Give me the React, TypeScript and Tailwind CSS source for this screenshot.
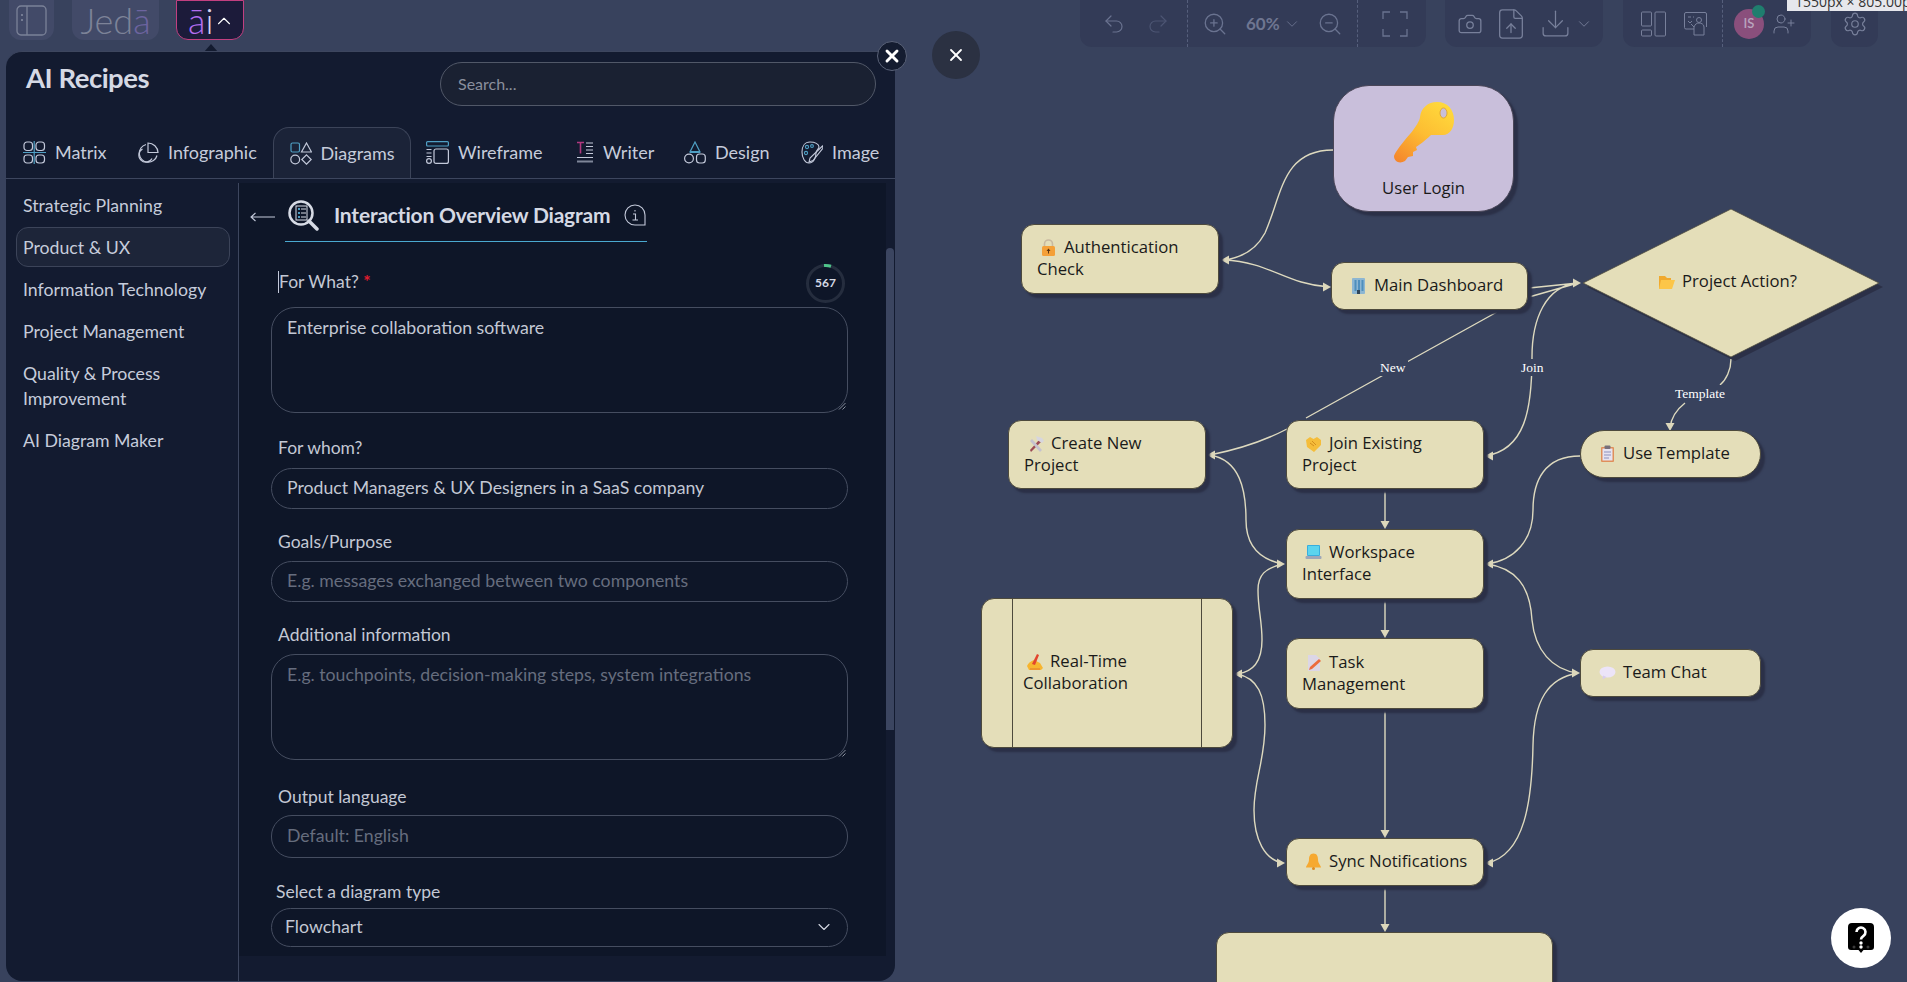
import type { ReactNode } from "react";
import {
  ChevronDown,
  ChevronUp,
  Camera,
  Download,
  FileUp,
  Redo2,
  Settings,
  Undo2,
  UserPlus,
  X,
  ZoomIn,
  ZoomOut,
} from "lucide-react";

/* ================= SMALL DRAWINGS ================= */
const BLUE = "#4f9fc4";
const LIGHT = "#c3c9da";

function Tab({ icon, label, w, active }: { icon: ReactNode; label: string; w: string; active?: boolean }) {
  return (
    <div
      className={`flex h-full items-center gap-[9px] ${
        active ? "rounded-t-2xl border border-b-0 border-[#3c4459] bg-[#1b2338] pl-[16px] pr-[12px]" : "px-[15.500px]"
      }`}
    >
      {icon}
      <span className={`${w} whitespace-nowrap text-[18px] text-[#c6ccdb]`}>{label}</span>
    </div>
  );
}

const MatrixIcon = (
  <svg width="23" height="23" viewBox="0 0 23 23" fill="none" stroke={LIGHT} strokeWidth="1.2">
    <rect x="1" y="1" width="8.5" height="8.5" rx="3" />
    <rect x="13" y="1" width="8.5" height="8.5" rx="3" />
    <rect x="1" y="14" width="8.5" height="8" rx="3" />
    <rect x="13" y="14" width="8.5" height="8" rx="3" />
    <path d="M0 11.5h23M11.2 0v23" stroke={BLUE} />
  </svg>
);
const PieIcon = (
  <svg width="22" height="22" viewBox="0 0 22 22" fill="none" stroke={LIGHT} strokeWidth="1.2">
    <path d="M9 2.5a9 9 0 1 0 11 11" />
    <path d="M5.5 7a7 7 0 1 0 9.5 9.5" />
    <path d="M11 1a10 10 0 0 1 10 9.5H11z" />
  </svg>
);
const DiagramIcon = (
  <svg width="22" height="23" viewBox="0 0 22 23" fill="none" stroke={LIGHT} strokeWidth="1.2">
    <rect x="1" y="1" width="8.5" height="9" rx="1.5" stroke={BLUE} />
    <path d="M16.5 1l5 9h-10z" />
    <circle cx="5.2" cy="17.5" r="4.4" />
    <path d="M16.5 12.8l4.7 4.7-4.7 4.7-4.7-4.7z" />
  </svg>
);
const WireframeIcon = (
  <svg width="23" height="23" viewBox="0 0 23 23" fill="none" stroke={LIGHT} strokeWidth="1.2">
    <rect x="0.6" y="0.6" width="21.8" height="4.4" rx="1" stroke={BLUE} />
    <rect x="8" y="8" width="14.4" height="14.4" rx="2" />
    <path d="M0.5 8.5h5M0.5 12h5M0.5 15.5h5" />
    <circle cx="3" cy="20" r="2.4" />
  </svg>
);
const WriterIcon = (
  <svg width="18" height="23" viewBox="0 0 18 23" fill="none" stroke={LIGHT} strokeWidth="1.2">
    <path d="M1 1.5h7M4.5 1.5v11" stroke="#b0397f" strokeWidth="1.6" />
    <path d="M10 2h7M10 5.5h7M10 9h7M10 12.5h7M1 16.5h16" />
    <path d="M1 20.5h16" strokeWidth="2" stroke="#7f8699" />
  </svg>
);
const DesignIcon = (
  <svg width="22" height="23" viewBox="0 0 22 23" fill="none" stroke={LIGHT} strokeWidth="1.2">
    <path d="M11 1l5 10H6z" stroke={BLUE} />
    <path d="M6 11h10" stroke={BLUE} strokeWidth="2" />
    <circle cx="5" cy="17.5" r="4.4" />
    <rect x="12.5" y="13" width="8.8" height="9" rx="3" />
  </svg>
);
const ImageIcon = (
  <svg width="22" height="23" viewBox="0 0 22 23" fill="none" stroke={LIGHT} strokeWidth="1.1">
    <path d="M9 1c5 0 9 2 9 5 0 2-3 3-3 6 0 4-2 10-7 10-4 0-7-5-7-11C1 5 4 1 9 1z" />
    <circle cx="6" cy="6" r="1.6" stroke={BLUE} />
    <circle cx="11" cy="5" r="1.4" stroke={BLUE} />
    <circle cx="5" cy="12" r="1.6" stroke={BLUE} />
    <path d="M21.5 5L9 17l-1 4 4-1.500L22 7z" />
  </svg>
);

const Grip = () => (
  <svg className="absolute bottom-[2px] right-[1px]" width="8" height="8" viewBox="0 0 8 8" stroke="#aab0bd" strokeWidth="0.8">
    <path d="M7.500 1L1 7.500M7.500 4.500L4.500 7.500" />
  </svg>
);

/* tiny colour pictures that stand for the emoji in the node labels */
const Emo = ({ children }: { children: ReactNode }) => (
  <svg className="mr-[7px] inline-block align-[-3px]" width="17" height="17" viewBox="0 0 17 17">
    {children}
  </svg>
);
const LockE = (
  <Emo>
    <path d="M4.500 7V5a4 4 0 0 1 8 0v2" fill="none" stroke="#c8b9a0" strokeWidth="1.6" />
    <rect x="2" y="7" width="13" height="10" rx="1.500" fill="#f4a038" />
    <path d="M8.500 9.500l2 2.500h-4zM8 12h1v2.500H8z" fill="#5b3410" />
  </Emo>
);
const BuildingE = (
  <Emo>
    <rect x="2" y="1" width="13" height="16" rx="1" fill="#8db6d2" />
    <path d="M4.500 3h2v11h-2zM8 3h2v11H8zM11.500 3h2v11h-2z" fill="#4f8fbd" />
    <rect x="7" y="13" width="3" height="4" fill="#30465a" />
  </Emo>
);
const ToolsE = (
  <Emo>
    <path d="M3 15L12 5l2 2-10 10z" fill="#9c4a54" />
    <path d="M15 15L5 4l-2 2 10 11z" fill="#c5c2cf" />
    <path d="M9 1l6 2 2 3-2 2-5-3z" fill="#d7d6de" />
  </Emo>
);
const HandE = (
  <Emo>
    <path d="M1 5l4-3 3.500 2L12 2l4 3 0 5-7 7-7-5z" fill="#f5bd3a" />
    <path d="M5 8l4 3M7 6l4 4" stroke="#d48e1e" strokeWidth="1" />
  </Emo>
);
const FolderE = (
  <Emo>
    <path d="M1 3h6l2 2h4v11H1z" fill="#f0a92e" />
    <path d="M3 7h14l-3 9H1z" fill="#fcc648" />
  </Emo>
);
const ClipE = (
  <Emo>
    <rect x="2" y="2" width="13" height="15" rx="1" fill="#e08f5b" />
    <rect x="3.500" y="3.500" width="10" height="12" fill="#e6e3f0" />
    <rect x="5.500" y="0.500" width="6" height="3.500" rx="1" fill="#77707a" />
    <path d="M5 7h7M5 10h7M5 13h5" stroke="#8d91bd" strokeWidth="1" />
  </Emo>
);
const LaptopE = (
  <Emo>
    <rect x="2" y="1" width="13" height="11" rx="1" fill="#38aede" />
    <rect x="3" y="2" width="11" height="9" fill="#5cd4ee" />
    <rect x="0.500" y="12" width="16" height="3" rx="1" fill="#9fa7b8" />
  </Emo>
);
const WriteE = (
  <Emo>
    <path d="M1 13c1-3 4-5 7-6l6 3 3 5-2 2H3z" fill="#f7b52f" />
    <path d="M6 11L11 1l2 1-4 10z" fill="#e2452e" />
    <path d="M4 16h10" stroke="#e2762e" strokeWidth="1" />
  </Emo>
);
const MemoE = (
  <Emo>
    <path d="M3 1h8l4 4v12H3z" fill="#dcd6e6" />
    <path d="M5 13l9-8 2 2-9 8-3 1z" fill="#ec6a3d" />
  </Emo>
);
const BellE = (
  <Emo>
    <path d="M8.500 0.500c3.500 0 4.500 3 4.500 6 0 4 3 6 3 8H1c0-2 3-4 3-8 0-3 1-6 4.500-6z" fill="#f6a931" />
    <circle cx="8.500" cy="15.500" r="1.500" fill="#e08a1d" />
  </Emo>
);
const ChatE = (
  <Emo>
    <ellipse cx="8.500" cy="8" rx="8" ry="5.500" fill="#ece4f8" />
    <path d="M4 11.500l-.5 4 4-2.500z" fill="#d9cdee" />
  </Emo>
);

function Node({ cls, emoji, first, rest }: { cls: string; emoji: ReactNode; first: string; rest?: string }) {
  return (
    <div
      className={`absolute flex items-center rounded-[13px] border border-[#4d4a3c] bg-[#e4deb9] pb-[2px] pl-[15px] text-[16.700px] leading-[22px] text-[#1a1a1a] shadow-[4px_4px_2px_#2b3047] ${cls}`}
    >
      <div>
        <div className="whitespace-nowrap pl-[3px]">
          {emoji}
          {first}
        </div>
        {rest && <div className="whitespace-nowrap">{rest}</div>}
      </div>
    </div>
  );
}

const EDGE = "M1333 150C1282 150 1282 195 1265 233C1256 250 1240 258 1224 260 M1224 260C1270 262 1285 284 1329 287 M1529 288L1578 283 M1529 297L1578 283 M1497 312L1306 418 M1287 429C1262 442 1235 450 1210 455 M1485 456C1525 450 1532 410 1532 357C1532 320 1545 286 1578 283 M1731 359C1731 370 1726 380 1720 385 M1685 403C1676 410 1671 418 1670 428 M1385 489V527 M1385 600V636 M1385 710V836 M1385 888V930 M1210 455C1240 460 1246 490 1246 520C1246 548 1262 560 1283 564 M1283 564C1265 568 1258 575 1258 590C1258 610 1262 620 1262 640C1262 660 1254 672 1237 674 M1237 674C1258 678 1265 695 1265 725C1265 760 1254 780 1254 810C1254 840 1265 860 1283 863 M1580 456C1545 456 1533 480 1533 510C1533 540 1515 560 1487 564 M1487 564C1515 568 1530 585 1532 620C1535 650 1552 670 1578 673 M1578 673C1548 678 1534 700 1533 745C1532 800 1525 855 1487 863";

/* ================= PAGE ================= */
export default function App() {
  return (
    <div className="relative h-[982px] w-[1907px] overflow-hidden bg-[#38425d] font-[Lato,sans-serif]">
      {/* CANVAS */}
      <div className="absolute -top-[1px] left-0 h-[983px] w-[1907px] font-['Open_Sans',sans-serif]">
        <svg className="absolute left-0 top-[1px]" width="1907" height="982" fill="none">
          <path d={EDGE} stroke="#dedabf" strokeWidth="1.400" />
          {/* arrow heads */}
          <g fill="#dcd7bb">
            <path d="M1221 260l8-4.500v9z" />
            <path d="M1331 287l-8-4.500v9z" />
            <path d="M1581 283l-8-4.500v9z" />
            <path d="M1207 455l8-4.500v9z" />
            <path d="M1485 456l8-4.500v9z" />
            <path d="M1670 431l-4.500-8h9z" />
            <path d="M1385 529l-4.500-8h9z" />
            <path d="M1385 638l-4.500-8h9z" />
            <path d="M1385 838l-4.500-8h9z" />
            <path d="M1385 932l-4.500-8h9z" />
            <path d="M1285 564l-8-4.500v9z" />
            <path d="M1234 674l8-4.500v9z" />
            <path d="M1285 863l-8-4.500v9z" />
            <path d="M1485 564l8-4.500v9z" />
            <path d="M1580 673l-8-4.500v9z" />
            <path d="M1485 863l8-4.500v9z" />
          </g>
          <polygon points="1583,283 1731,209 1879,283 1731,357" fill="#2b3047" transform="translate(4 4)" />
          <polygon points="1583,283 1731,209 1879,283 1731,357" fill="#e4deb9" stroke="#4d4a3c" strokeWidth="0.800" />
        </svg>

        {/* user login node */}
        <div className="absolute left-[1333px] top-[86px] flex h-[127px] w-[181px] flex-col items-center rounded-[36px] border border-[#4a4658] bg-[#c9bfdb] text-[16.700px] text-[#1a1a1a] shadow-[4px_4px_2px_#2b3047]">
          <svg className="mt-[16px]" width="61" height="61" viewBox="0 0 61 61">
            <defs>
              <linearGradient id="keyGrad" x1="0.800" y1="0" x2="0.100" y2="1">
                <stop offset="0" stopColor="#ffd93c" />
                <stop offset="0.500" stopColor="#fdbd32" />
                <stop offset="1" stopColor="#f5872c" />
              </linearGradient>
            </defs>
            <path
              d="M44 0C55 0 61 8 61 18C61 26 57 33 50 33L38 33C35 36 28 42 23 45L24 48L20 50L20 54L15 55L12 59C7 62 1 60 1 54C2 50 10 40 17 32C23 25 27 18 27 15C28 6 35 0 44 0Z"
              fill="url(#keyGrad)"
            />
            <ellipse cx="50.500" cy="11" rx="3.500" ry="5" fill="#c9bfdb" stroke="#dba02a" strokeWidth="0.800" />
          </svg>
          <span className="mt-[14px] leading-[22px]">User Login</span>
        </div>

        <Node cls="left-[1021px] top-[225px] h-[70px] w-[198px]" emoji={LockE} first="Authentication" rest="Check" />
        <Node cls="left-[1331px] top-[263px] h-[48px] w-[197px]" emoji={BuildingE} first="Main Dashboard" />
        <Node cls="left-[1008px] top-[421px] h-[69px] w-[198px]" emoji={ToolsE} first="Create New" rest="Project" />
        <Node cls="left-[1286px] top-[421px] h-[69px] w-[198px]" emoji={HandE} first="Join Existing" rest="Project" />
        <Node cls="left-[1580px] top-[431px] h-[48px] w-[181px] rounded-[24px]" emoji={ClipE} first="Use Template" />
        <Node cls="left-[1286px] top-[530px] h-[70px] w-[198px]" emoji={LaptopE} first="Workspace" rest="Interface" />
        <Node cls="left-[1286px] top-[639px] h-[71px] w-[198px]" emoji={MemoE} first="Task" rest="Management" />
        <Node cls="left-[1580px] top-[650px] h-[48px] w-[181px]" emoji={ChatE} first="Team Chat" />
        <Node cls="left-[1286px] top-[839px] h-[48px] w-[198px]" emoji={BellE} first="Sync Notifications" />

        {/* real-time node with its two side bars */}
        <div className="absolute left-[981px] top-[599px] flex h-[150px] w-[252px] rounded-[13px] border border-[#4d4a3c] bg-[#e4deb9] text-[16.700px] leading-[22px] text-[#1a1a1a] shadow-[4px_4px_2px_#2b3047]">
          <div className="w-[31px] border-r border-[#4d4a3c]" />
          <div className="flex flex-1 items-center pb-[2px] pl-[10px]">
            <div>
              <div className="whitespace-nowrap pl-[3px]">
                {WriteE}
                Real-Time
              </div>
              <div className="whitespace-nowrap">Collaboration</div>
            </div>
          </div>
          <div className="w-[31px] border-l border-[#4d4a3c]" />
        </div>

        <div className="absolute left-[1216px] top-[933px] h-[70px] w-[337px] rounded-[13px] border border-[#4d4a3c] bg-[#e4deb9] shadow-[4px_4px_2px_#2b3047]" />

        {/* project action text + edge labels */}
        <div className="absolute left-[1658px] top-[271px] whitespace-nowrap text-[16.700px] leading-[22px] text-[#1a1a1a]">
          {FolderE}
          Project Action?
        </div>
        <span className="absolute left-[1378px] top-[360px] bg-[#38425d] px-[2px] font-['Liberation_Serif',serif] text-[13.500px] leading-[17px] text-white">New</span>
        <span className="absolute left-[1519px] top-[360px] bg-[#38425d] px-[2px] font-['Liberation_Serif',serif] text-[13.500px] leading-[17px] text-white">Join</span>
        <span className="absolute left-[1673px] top-[386px] bg-[#38425d] px-[2px] font-['Liberation_Serif',serif] text-[13.500px] leading-[17px] text-white">Template</span>
      </div>

      {/* TOP BAR */}
      <div className="absolute left-0 right-0 top-0 flex items-start justify-between pl-[9px] pr-[29px]">
        <div className="flex items-start">
          <div className="flex h-[40px] w-[45px] items-center justify-center rounded-b-xl bg-[#424a68]">
            <svg width="31" height="31" viewBox="0 0 31 31" fill="none" stroke="#7b8298" strokeWidth="1.300">
              <rect x="1" y="1" width="29" height="29" rx="4" />
              <path d="M11 1v29" />
              <path d="M6 9v2M6 14v2" strokeWidth="1.800" />
            </svg>
          </div>
          <div className="ml-[18px] flex h-[40px] w-[87px] items-center justify-center rounded-b-xl bg-[#424a68] text-[36px] font-light leading-none text-[#7d8398]">
            Jed<span className="text-[#6d64a0]">ā</span>
          </div>
          <div className="relative ml-[17px] flex h-[40px] w-[68px] items-center rounded-b-xl border border-[#c23f80] bg-[#1c1b3a] pl-[11px] text-[36px] font-light leading-none">
            <span className="text-[#b36df0]">ā</span>
            <span className="text-[#d8d2f0]">i</span>
            <ChevronUp size={22} strokeWidth={1.200} className="mt-[2px] text-white" />
            <svg className="absolute left-[27px] top-[43px]" width="14" height="8" viewBox="0 0 14 8">
              <path d="M0 8L7 0l7 8z" fill="#131b30" />
            </svg>
          </div>
        </div>

        <div className="flex items-start text-[#6a7390]">
          <div className="flex h-[47px] w-[346px] items-center rounded-b-xl bg-[#333b57]">
            <Undo2 size={24} strokeWidth={1.200} className="ml-[22px]" />
            <Redo2 size={24} strokeWidth={1.200} className="ml-[20px] text-[#4c5573]" />
            <div className="ml-[17px] h-full border-l border-dashed border-[#565f7c]" />
            <ZoomIn size={26} strokeWidth={1.200} className="ml-[14px]" />
            <span className="ml-[18px] w-[34px] text-[17px] font-bold text-[#6f7691]">60%</span>
            <ChevronDown size={18} strokeWidth={1.200} className="ml-[3px]" />
            <ZoomOut size={26} strokeWidth={1.200} className="ml-[16px]" />
            <div className="ml-[14px] h-full border-l border-dashed border-[#565f7c]" />
            <svg className="ml-[24px]" width="26" height="26" viewBox="0 0 26 26" fill="none" stroke="currentColor" strokeWidth="1.300">
              <path d="M1 8V1h7M18 1h7v7M25 18v7h-7M8 25H1v-7" />
            </svg>
          </div>

          <div className="ml-[19px] flex h-[47px] w-[158px] items-center rounded-b-xl bg-[#333b57] text-[#78809b]">
            <Camera size={26} strokeWidth={1.200} className="ml-[12px]" />
            <FileUp size={34} strokeWidth={0.900} className="ml-[11px]" />
            <Download size={33} strokeWidth={0.900} className="ml-[11px]" />
            <ChevronDown size={18} strokeWidth={1.200} className="ml-[3px]" />
          </div>

          <div className="ml-[20px] flex h-[47px] w-[188px] items-center rounded-b-xl bg-[#333b57] text-[#78809b]">
            <svg className="ml-[18px]" width="25" height="26" viewBox="0 0 25 26" fill="none" stroke="currentColor" strokeWidth="1">
              <rect x="0.500" y="1" width="10" height="14" rx="1" />
              <rect x="0.500" y="19" width="10" height="6" rx="1" />
              <rect x="14" y="1" width="10.500" height="24" rx="1" />
            </svg>
            <svg className="ml-[18px]" width="23" height="24" viewBox="0 0 23 24" fill="none" stroke="currentColor" strokeWidth="1">
              <path d="M10 17H2a1.500 1.500 0 0 1-1.500-1.500V2A1.500 1.500 0 0 1 2 .5h19A1.500 1.500 0 0 1 22.500 2v13" />
              <circle cx="15" cy="8" r="2.500" />
              <path d="M10 23v-8l-3-3M10 15c1-3 3-4 5-4s5 1 5 4v8H10M4 5h3M9 5h1M4 9l2 2 2-2" />
            </svg>
            <div className="ml-[15px] h-full border-l border-dashed border-[#565f7c]" />
            <div className="relative ml-[11px] flex h-[30px] w-[30px] items-center justify-center rounded-full bg-[#8a4f7c] text-[13px] font-semibold text-[#b9a4bd]">
              IS
              <span className="absolute -right-[1px] -top-[4px] h-[13px] w-[13px] rounded-full bg-[#1f7e6e]" />
            </div>
            <UserPlus size={24} strokeWidth={1} className="ml-[8px]" />
          </div>

          <div className="ml-[20px] flex h-[47px] w-[47px] items-center justify-center rounded-b-xl bg-[#333b57] text-[#78809b]">
            <Settings size={26} strokeWidth={1.100} />
          </div>
        </div>
      </div>

      {/* size tooltip */}
      <div className="absolute left-[1787px] top-0 h-[11px] w-[120px] overflow-hidden bg-[#e6e7ec] pl-[8px] font-['Open_Sans',sans-serif] text-[14px] leading-[4px] text-[#333]">
        <span className="whitespace-nowrap">1550px × 805.00px</span>
      </div>

      {/* AI RECIPES PANEL */}
      <div className="absolute left-[6px] top-[51px] flex h-[930px] w-[889px] flex-col rounded-b-2xl rounded-t-2xl border-t border-[#3d465e] bg-[#131b30]">
        <div className="flex items-start justify-between pl-[20px] pr-[19px] pt-[10px]">
          <h1 className="-mt-[4px] text-[27.500px] font-bold leading-[40px] tracking-[-0.500px] text-[#d5d9e4]">AI Recipes</h1>
          <div className="flex h-[44px] w-[436px] items-center rounded-[22px] border border-[#515868] bg-[#1a2132] pl-[17px] text-[16px] text-[#8a8f9d]">
            Search...
          </div>
        </div>

        <div className="mt-[21px] flex h-[52px] items-center border-b border-[#3d465e] pl-[1.500px]">
          <Tab icon={MatrixIcon} label="Matrix" w="w-[51px]" />
          <Tab icon={PieIcon} label="Infographic" w="w-[89px]" />
          <Tab icon={DiagramIcon} label="Diagrams" w="w-[77px]" active />
          <Tab icon={WireframeIcon} label="Wireframe" w="w-[87px]" />
          <Tab icon={WriterIcon} label="Writer" w="w-[50px]" />
          <Tab icon={DesignIcon} label="Design" w="w-[55px]" />
          <Tab icon={ImageIcon} label="Image" w="w-[49px]" />
        </div>

        <div className="mt-[4px] flex min-h-0 flex-1">
          {/* SIDEBAR */}
          <div className="flex w-[233px] shrink-0 flex-col gap-[2px] border-r border-[#3d465e] pl-[10px] pr-[8px] pt-[2px] text-[17.700px] leading-[25px] text-[#c6ccdb]">
            <div className="flex h-[40px] items-center px-[7px]">Strategic Planning</div>
            <div className="flex h-[40px] items-center rounded-xl border border-[#3c4459] bg-[#1d2539] px-[6px]">Product &amp; UX</div>
            <div className="flex h-[40px] items-center px-[7px]">Information Technology</div>
            <div className="flex h-[40px] items-center px-[7px]">Project Management</div>
            <div className="px-[7px] py-[7.500px]">
              Quality &amp; Process
              <br />
              Improvement
            </div>
            <div className="flex h-[40px] items-center px-[7px]">AI Diagram Maker</div>
          </div>

          {/* MAIN */}
          <div className="mb-[25px] flex min-w-0 flex-1 bg-[#0e1628]">
            <div className="min-w-0 flex-1 pl-[32px]">
              {/* recipe title */}
              <div className="-ml-[21px] mt-[6px] flex items-center">
                <svg className="mr-[10px] mt-[2px]" width="25" height="10" viewBox="0 0 25 10" fill="none" stroke="#c3c9da" strokeWidth="1.100">
                  <path d="M25 5H1M5.500 1L1 5l4.500 4" />
                </svg>
                <div className="flex h-[53px] w-[362px] items-center border-b-[1.500px] border-[#4aa9d0] pl-[3px]">
                  <svg width="31" height="31" viewBox="0 0 31 31" fill="none">
                    <circle cx="13" cy="13" r="11.500" stroke="#d7dbe5" strokeWidth="2.500" />
                    <path d="M21 21l8 8" stroke="#d7dbe5" strokeWidth="3.500" strokeLinecap="round" />
                    <rect x="8" y="6" width="11" height="14" fill="#0e1628" stroke="#d7dbe5" strokeWidth="1" />
                    <path d="M10 9h2M10 13h2M10 17h2" stroke="#4f9fc4" strokeWidth="2" />
                    <path d="M13 9h5M13 13h5M13 17h5" stroke="#d7dbe5" strokeWidth="1" />
                  </svg>
                  <span className="ml-[15px] w-[275px] whitespace-nowrap text-[21px] font-bold tracking-[-0.200px] text-[#d5d9e4]">Interaction Overview Diagram</span>
                  <svg className="ml-[15px]" width="22" height="23" viewBox="0 0 22 23" fill="none" stroke="#c3c9da" strokeWidth="1.100">
                    <path d="M11 1a10 10 0 1 0 0 20h10v-10A10 10 0 0 0 11 1z" />
                    <path d="M9 10h2.500v6M8.500 16h5.500M11 6v1.500" />
                  </svg>
                </div>
              </div>

              {/* form */}
              <div className="mt-[21.500px] flex h-[39px] w-[577px] items-center justify-between pl-[7px] pr-[3px]">
                <div className="-mt-[3px] border-l border-[#c3c9da] text-[17.500px] leading-[22px] text-[#c3c8d4]">
                  For What? <span className="font-bold text-[#e01c2e]">*</span>
                </div>
                <div className="relative flex h-[39px] w-[39px] items-center justify-center rounded-full border-[3px] border-[#252d3e] text-[12px] font-bold text-[#d5d9e4]">
                  567
                  <svg className="absolute -left-[3px] -top-[3px]" width="39" height="39" viewBox="0 0 39 39" fill="none">
                    <path d="M18 1.600a18 18 0 0 1 7 .7" stroke="#4fc48a" strokeWidth="3" />
                  </svg>
                </div>
              </div>
              <div className="relative mt-[4px] h-[106px] w-[577px] rounded-[24px] border border-[#454d60] px-[15px] pt-[9px] text-[17.700px] leading-[22px] text-[#c3c8d4]">
                Enterprise collaboration software
                <Grip />
              </div>

              <div className="ml-[7px] mt-[25px] text-[17.500px] leading-[20px] text-[#c3c8d4]">For whom?</div>
              <div className="mt-[10px] flex h-[41px] w-[577px] items-center rounded-[21px] border border-[#454d60] px-[15px] text-[17.700px] text-[#c3c8d4]">
                Product Managers &amp; UX Designers in a SaaS company
              </div>

              <div className="ml-[7px] mt-[23px] text-[17.500px] leading-[20px] text-[#c3c8d4]">Goals/Purpose</div>
              <div className="mt-[9px] flex h-[41px] w-[577px] items-center rounded-[21px] border border-[#454d60] px-[15px] text-[17.700px] text-[#666d7e]">
                E.g. messages exchanged between two components
              </div>

              <div className="ml-[7px] mt-[23px] text-[17.500px] leading-[20px] text-[#c3c8d4]">Additional information</div>
              <div className="relative mt-[9px] h-[106px] w-[577px] rounded-[24px] border border-[#454d60] px-[15px] pt-[9px] text-[17.700px] leading-[22px] text-[#666d7e]">
                E.g. touchpoints, decision-making steps, system integrations
                <Grip />
              </div>

              <div className="ml-[7px] mt-[27px] text-[17.500px] leading-[20px] text-[#c3c8d4]">Output language</div>
              <div className="mt-[8px] flex h-[43px] w-[577px] items-center rounded-[21px] border border-[#454d60] px-[15px] text-[17.700px] text-[#666d7e]">
                Default: English
              </div>

              <div className="ml-[5px] mt-[24px] text-[17.500px] leading-[20px] text-[#c3c8d4]">Select a diagram type</div>
              <div className="mt-[6px] flex h-[39px] w-[577px] items-center justify-between rounded-[20px] border border-[#454d60] pl-[13px] pr-[13px] text-[17.700px] text-[#c3c8d4]">
                Flowchart
                <ChevronDown size={20} strokeWidth={1.300} className="text-[#d5d9e4]" />
              </div>
            </div>

            {/* scrollbar */}
            <div className="flex w-[9px] shrink-0 bg-[#131b30] pt-[65px]">
              <div className="h-[482px] w-[8px] rounded-t-md bg-[#3b4560]" />
            </div>
          </div>
        </div>

        {/* close on panel corner */}
        <div className="absolute -right-[12px] -top-[11px] flex h-[30px] w-[30px] items-center justify-center rounded-full border border-[#5a6278] bg-[#141c30]">
          <X size={20} strokeWidth={3.500} className="text-white" />
        </div>
      </div>

      {/* CLOSE */}
      <div className="absolute left-[932px] top-[31px] flex h-[48px] w-[48px] items-center justify-center rounded-full bg-[#2b3142]">
        <X size={20} strokeWidth={2.200} className="text-white" />
      </div>

      {/* HELP */}
      <div className="absolute left-[1831px] top-[908px] flex h-[60px] w-[60px] items-center justify-center rounded-full bg-white">
        <svg width="26" height="30" viewBox="0 0 26 30">
          <path d="M4 0h18a4 4 0 0 1 4 4v20a3 3 0 0 1-3 3h-7.500L13 30l-2.500-3H3a3 3 0 0 1-3-3V4a4 4 0 0 1 4-4z" fill="#000" />
          <path d="M8.500 9a4.500 4.500 0 1 1 7 3.800c-1.500 1-2.500 1.700-2.500 3.700" fill="none" stroke="#fff" strokeWidth="2.600" />
          <circle cx="13" cy="20" r="1.700" fill="#fff" />
          <circle cx="13" cy="24" r="1.700" fill="#fff" />
          <circle cx="6" cy="24" r="1.500" fill="#3a3a3a" />
          <circle cx="20" cy="24" r="1.500" fill="#3a3a3a" />
        </svg>
      </div>
    </div>
  );
}
